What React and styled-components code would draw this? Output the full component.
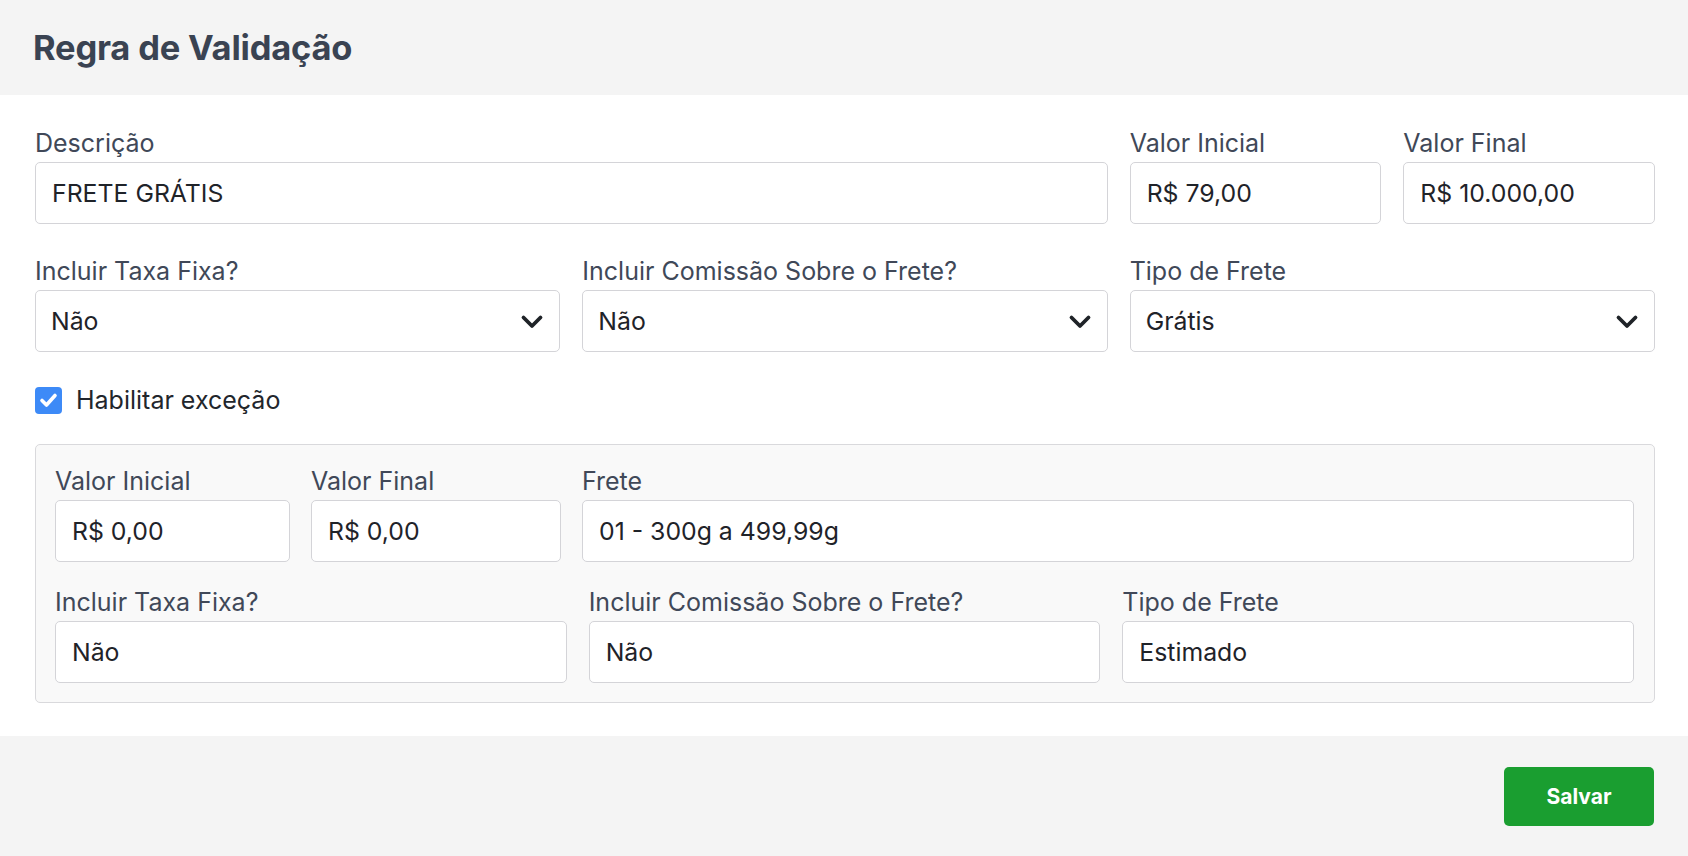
import React from "react";
import styled, { createGlobalStyle } from "styled-components";

const GlobalStyle = createGlobalStyle`
  html, body {
    margin: 0;
    padding: 0;
    background: #ffffff;
  }
  body {
    font-family: Inter, "Noto Sans", "Liberation Sans", sans-serif;
    -webkit-font-smoothing: antialiased;
  }
  * { box-sizing: border-box; }
`;

function Chevron() {
  return (
    <svg width="24" height="15" viewBox="0 0 24 15" fill="none">
      <polyline
        points="3.5,3.5 12,12 20.5,3.5"
        stroke="#1f2328"
        strokeWidth="3.8"
        strokeLinecap="round"
        strokeLinejoin="round"
      />
    </svg>
  );
}

function Check() {
  return (
    <svg width="19" height="16" viewBox="0 0 19 16" fill="none">
      <polyline
        points="3,8.5 7.5,13 16,3.5"
        stroke="#ffffff"
        strokeWidth="3.6"
        strokeLinecap="round"
        strokeLinejoin="round"
      />
    </svg>
  );
}

export default function App() {
  return (
    <Page>
      <GlobalStyle />
      <Header>
        <Title>Regra de Validação</Title>
      </Header>
      <Body>
        <Grid>
          <Field span={8}>
            <Label>Descrição</Label>
            <Input>FRETE GRÁTIS</Input>
          </Field>
          <Field span={2}>
            <Label>Valor Inicial</Label>
            <Input>R$ 79,00</Input>
          </Field>
          <Field span={2}>
            <Label>Valor Final</Label>
            <Input>R$ 10.000,00</Input>
          </Field>
        </Grid>
        <Grid>
          <Field span={4}>
            <Label>Incluir Taxa Fixa?</Label>
            <Select>
              <span>Não</span>
              <Chevron />
            </Select>
          </Field>
          <Field span={4}>
            <Label>Incluir Comissão Sobre o Frete?</Label>
            <Select>
              <span>Não</span>
              <Chevron />
            </Select>
          </Field>
          <Field span={4}>
            <Label>Tipo de Frete</Label>
            <Select>
              <span>Grátis</span>
              <Chevron />
            </Select>
          </Field>
        </Grid>
        <CheckRow>
          <CheckBox>
            <Check />
          </CheckBox>
          <CheckText>Habilitar exceção</CheckText>
        </CheckRow>
        <ExceptionBox>
          <ExceptionTop>
            <Field>
              <Label>Valor Inicial</Label>
              <Input>R$ 0,00</Input>
            </Field>
            <Field>
              <Label>Valor Final</Label>
              <Input>R$ 0,00</Input>
            </Field>
            <Field>
              <Label>Frete</Label>
              <Input>01 - 300g a 499,99g</Input>
            </Field>
          </ExceptionTop>
          <ExceptionBottom>
            <Field>
              <Label>Incluir Taxa Fixa?</Label>
              <Input>Não</Input>
            </Field>
            <Field>
              <Label>Incluir Comissão Sobre o Frete?</Label>
              <Input>Não</Input>
            </Field>
            <Field>
              <Label>Tipo de Frete</Label>
              <Input>Estimado</Input>
            </Field>
          </ExceptionBottom>
        </ExceptionBox>
      </Body>
      <Footer>
        <SaveButton>Salvar</SaveButton>
      </Footer>
    </Page>
  );
}

const Page = styled.div`
  width: 1688px;
  min-height: 856px;
  display: flex;
  flex-direction: column;
  background: #f4f4f4;
`;

const Header = styled.header`
  height: 95px;
  display: flex;
  align-items: center;
  padding: 0 33px;
  background: #f4f4f4;
`;

const Title = styled.h1`
  margin: 0;
  font-size: 34.5px;
  font-weight: 700;
  color: #3a4352;
  letter-spacing: -0.2px;
`;

const Body = styled.main`
  background: #ffffff;
  padding: 33px 33px 33px 35px;
  display: flex;
  flex-direction: column;
`;

const Grid = styled.div`
  display: grid;
  grid-template-columns: repeat(12, 1fr);
  column-gap: 22px;
  & + & {
    margin-top: 32px;
  }
`;

const Field = styled.div`
  display: flex;
  flex-direction: column;
  min-width: 0;
  grid-column: ${(p) => (p.span ? `span ${p.span}` : "auto")};
`;

const Label = styled.label`
  display: block;
  height: 30px;
  line-height: 30px;
  margin-bottom: 4px;
  font-size: 25px;
  color: #404858;
  white-space: nowrap;
`;

const Input = styled.div`
  height: 62px;
  display: flex;
  align-items: center;
  padding: 0 16px;
  background: #ffffff;
  border: 1px solid #d4d4d8;
  border-radius: 5px;
  font-size: 24.8px;
  color: #1f2329;
  white-space: nowrap;
  overflow: hidden;
`;

const Select = styled(Input)`
  justify-content: space-between;
  padding: 0 15px 0 15px;
`;

const CheckRow = styled.div`
  display: flex;
  align-items: center;
  gap: 14px;
  height: 30px;
  margin-top: 33px;
`;

const CheckBox = styled.span`
  width: 27px;
  height: 27px;
  border-radius: 4px;
  background: #3d8af7;
  display: flex;
  align-items: center;
  justify-content: center;
`;

const CheckText = styled.span`
  font-size: 25px;
  color: #22262c;
`;

const ExceptionBox = styled.section`
  margin-top: 29px;
  padding: 21px 20px 19px 19px;
  background: #f9f9f9;
  border: 1px solid #d9d9dc;
  border-radius: 5px;
  display: flex;
  flex-direction: column;
  gap: 25px;
`;

const ExceptionTop = styled.div`
  display: grid;
  grid-template-columns: 235px 250px 1fr;
  column-gap: 21px;
`;

const ExceptionBottom = styled.div`
  display: grid;
  grid-template-columns: repeat(3, 1fr);
  column-gap: 22px;
`;

const Footer = styled.footer`
  flex: 1;
  display: flex;
  justify-content: flex-end;
  align-items: flex-start;
  padding: 31px 34px 30px;
  background: #f4f4f4;
`;

const SaveButton = styled.button`
  width: 150px;
  height: 59px;
  border: none;
  border-radius: 5px;
  background: #1a9e30;
  color: #ffffff;
  font-family: Inter, "Liberation Sans", sans-serif;
  font-size: 21px;
  font-weight: 700;
  cursor: pointer;
`;
